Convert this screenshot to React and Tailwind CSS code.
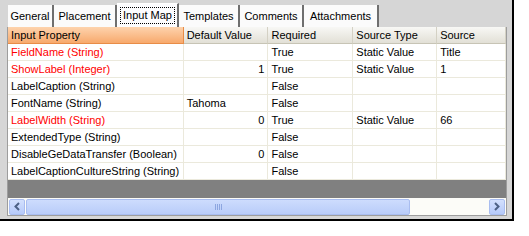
import React from "react";

const tabs = [
  { label: "General", w: "w-[46px]" },
  { label: "Placement", w: "w-[63px]" },
  { label: "Input Map", w: "w-[62px]", active: true },
  { label: "Templates", w: "w-[61px]" },
  { label: "Comments", w: "w-[64px]" },
  { label: "Attachments", w: "w-[75px]" },
];

const rows = [
  { name: "FieldName (String)", red: true, def: "", req: "True", type: "Static Value", src: "Title" },
  { name: "ShowLabel (Integer)", red: true, def: "1", req: "True", type: "Static Value", src: "1" },
  { name: "LabelCaption (String)", def: "", req: "False", type: "", src: "" },
  { name: "FontName (String)", def: "Tahoma", left: true, req: "False", type: "", src: "" },
  { name: "LabelWidth (String)", red: true, def: "0", req: "True", type: "Static Value", src: "66" },
  { name: "ExtendedType (String)", def: "", req: "False", type: "", src: "" },
  { name: "DisableGeDataTransfer (Boolean)", def: "0", req: "False", type: "", src: "" },
  { name: "LabelCaptionCultureString (String)", def: "", req: "False", type: "", src: "" },
];

const cell = "h-[17px] flex items-center px-[3px] border-r border-b border-[#ebe9dc] whitespace-nowrap overflow-hidden";

const App = () => {
  return (
    <div className="w-[529px] h-[236px] bg-white" style={{ fontFamily: '"Liberation Sans", Arial, sans-serif' }}>
      <div className="w-[514px] h-[221px] bg-[#d6d6d6] border-r-2 border-b-2 border-black flex flex-col text-[11px] text-black">
        {/* tab strip */}
        <div className="h-[27px] flex items-end pl-[8px]">
          {tabs.map((t) =>
            t.active ? (
              <div
                key={t.label}
                className={`${t.w} h-[24px] bg-[#fcfcfe] border-l border-t border-white border-r-2 border-r-[#6f6f6f] flex items-center justify-center`}
              >
                <span className="border border-dotted border-black px-[2px] leading-[15px]">{t.label}</span>
              </div>
            ) : (
              <div
                key={t.label}
                className={`${t.w} h-[22px] bg-[#fbfbfb] border-r-2 border-r-[#6f6f6f] flex items-center justify-center`}
              >
                {t.label}
              </div>
            )
          )}
        </div>

        {/* grid */}
        <div className="ml-[7px] w-[500px] border-l border-r border-[#9d9d9d] flex flex-col">
          <div className="flex h-[17px]">
            <div className="w-[176px] h-[17px] flex items-center px-[3px] bg-gradient-to-b from-[#fdd3ad] to-[#f7a96c] border-b border-r border-[#e88c47]">
              Input Property
            </div>
            {["Default Value", "Required", "Source Type", "Source"].map((h, i) => (
              <div
                key={h}
                className={`${["w-[85px]", "w-[85px]", "w-[84px]", "w-[69px]"][i]} h-[17px] flex items-center px-[3px] bg-gradient-to-b from-[#f8f8f5] to-[#e2e0d6] border-b border-b-[#c7c4b5] border-r border-r-[#d4d1c4]`}
              >
                {h}
              </div>
            ))}
          </div>
          {rows.map((r) => (
            <div key={r.name} className="flex bg-white">
              <div className={`${cell} w-[176px] ${r.red ? "text-[#ff0000]" : ""}`}>{r.name}</div>
              <div className={`${cell} w-[85px] ${r.left ? "justify-start" : "justify-end"}`}>{r.def}</div>
              <div className={`${cell} w-[85px]`}>{r.req}</div>
              <div className={`${cell} w-[84px]`}>{r.type}</div>
              <div className={`${cell} w-[69px]`}>{r.src}</div>
            </div>
          ))}
          <div className="h-[18px] bg-[#808080]" />
          {/* horizontal scrollbar */}
          <div className="h-[17px] bg-[#fcfcf8] flex items-center px-[1px] gap-[1px]">
            <div className="w-[16px] h-[16px] rounded-[2px] bg-gradient-to-b from-[#d3e0fd] to-[#b6cafa] border border-[#a9bdf0] flex items-center justify-center">
              <svg width="8" height="9" viewBox="0 0 8 9">
                <path d="M6 1 L2.5 4.5 L6 8" fill="none" stroke="#4d6185" strokeWidth="2" />
              </svg>
            </div>
            <div className="w-[384px] h-[16px] rounded-[2px] bg-gradient-to-b from-[#cddcfd] to-[#b9ccf9] border border-[#a9bdf0] flex items-center justify-center">
              <div className="flex gap-[1px]">
                {[0, 1, 2, 3].map((k) => (
                  <div key={k} className="w-[1px] h-[6px] bg-[#eef3fe] border-r border-[#8da6e0]" />
                ))}
              </div>
            </div>
            <div className="flex-1" />
            <div className="w-[16px] h-[16px] rounded-[2px] bg-gradient-to-b from-[#d3e0fd] to-[#b6cafa] border border-[#a9bdf0] flex items-center justify-center">
              <svg width="8" height="9" viewBox="0 0 8 9">
                <path d="M2 1 L5.5 4.5 L2 8" fill="none" stroke="#4d6185" strokeWidth="2" />
              </svg>
            </div>
          </div>
          <div className="h-[1px] bg-[#9d9d9d]" />
        </div>
      </div>
    </div>
  );
};

export default App;
